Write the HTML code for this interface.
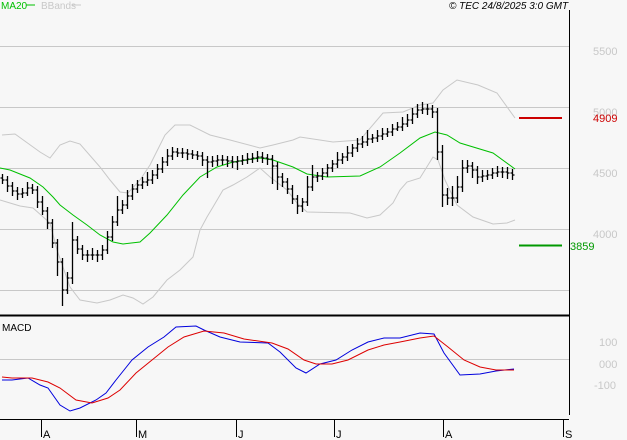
<!DOCTYPE html>
<html><head><meta charset="utf-8"><style>
html,body{margin:0;padding:0;background:#f7f7f7;}
svg{display:block;font-family:"Liberation Sans",sans-serif;}
</style></head><body>
<svg width="627" height="440" viewBox="0 0 627 440" xmlns="http://www.w3.org/2000/svg">
<rect width="627" height="440" fill="#f7f7f7"/>
<text x="1" y="9" font-size="10" fill="#00c000">MA20</text>
<line x1="26" y1="5" x2="35" y2="5" stroke="#00c000"/>
<text x="41" y="9" font-size="10" fill="#c8c8c8">BBands</text>
<line x1="72" y1="5" x2="81" y2="5" stroke="#c8c8c8"/>
<text x="449" y="9" font-size="10" font-style="italic" fill="#000">© TEC 24/8/2025 3:0 GMT</text>
<g stroke="#c8c8c8" stroke-width="1">
<line x1="0" y1="46.5" x2="569" y2="46.5"/><line x1="0" y1="107.5" x2="569" y2="107.5"/>
<line x1="0" y1="168.5" x2="569" y2="168.5"/><line x1="0" y1="229.5" x2="569" y2="229.5"/>
<line x1="0" y1="290.5" x2="569" y2="290.5"/><line x1="0" y1="359.5" x2="569" y2="359.5"/>
</g>
<g font-size="11" fill="#c8c8c8">
<text x="593" y="55">5500</text><text x="593" y="116">5000</text>
<text x="593" y="177">4500</text><text x="593" y="238">4000</text>
<text x="599" y="346">100</text><text x="599" y="368">000</text><text x="594" y="389">-100</text>
</g>
<polyline fill="none" stroke="#c8c8c8" points="2,135 15,134 40,152 50,158 60,145 70,141 80,144 100,167 110,180 120,192 128,193 140,180 150,165 165,135 175,125 190,125 210,135 230,140 260,148 273,145 293,140 300,137 333,142 360,140 383,113 403,112 420,105 433,103 443,90 457,80 478,85 497,93 515,118"/>
<polyline fill="none" stroke="#c8c8c8" points="0,200 10,203 20,206 33,208 50,223 57,250 70,287 80,300 97,303 110,300 123,295 133,298 143,304 153,297 167,280 180,270 193,257 200,230 207,217 213,207 223,190 233,185 247,177 260,168 270,177 287,190 297,203 307,212 350,213 367,218 380,215 393,203 400,190 407,182 420,178 433,157 438,160 445,180 457,205 473,217 493,224 507,223 515,220"/>
<polyline fill="none" stroke="#00c000" points="0,168 10,170 30,178 43,187 53,197 60,205 73,215 87,225 100,235 113,242 123,244 140,242 150,233 167,215 183,195 200,177 217,167 233,162 260,158 273,160 293,167 307,174 327,177 360,176 380,167 400,153 420,138 435,132 447,135 460,143 493,153 515,169"/>
<path fill="none" stroke="#000" stroke-width="1.3" d="
M2.5,174V184M0.5,178h2M2.5,180h2
M7.5,176V192M5.5,180h2M7.5,186h2
M12.5,182V196M10.5,186h2M12.5,191h2
M17.5,187V200M15.5,191h2M17.5,194h2
M22.5,188V198M20.5,194h2M22.5,193h2
M27.5,182V196M25.5,193h2M27.5,188h2
M32.5,184V194M30.5,188h2M32.5,190h2
M37.5,186V208M35.5,190h2M37.5,202h2
M42.5,196V215M40.5,202h2M42.5,211h2
M47.5,207V229M45.5,211h2M47.5,223h2
M52.5,219V248M50.5,223h2M52.5,243h2
M57.5,239V276M55.5,243h2M57.5,262h2
M62.5,258V306M60.5,262h2M62.5,290h2
M67.5,272V294M65.5,290h2M67.5,278h2
M72.5,222V284M70.5,278h2M72.5,240h2
M77.5,236V254M75.5,240h2M77.5,249h2
M82.5,245V260M80.5,249h2M82.5,255h2
M87.5,250V262M85.5,255h2M87.5,255h2
M92.5,248V260M90.5,255h2M92.5,255h2
M97.5,250V262M95.5,255h2M97.5,255h2
M102.5,245V260M100.5,255h2M102.5,250h2
M107.5,231V254M105.5,250h2M107.5,237h2
M112.5,216V241M110.5,237h2M112.5,222h2
M117.5,196V226M115.5,222h2M117.5,210h2
M122.5,200V214M120.5,210h2M122.5,205h2
M127.5,190V209M125.5,205h2M127.5,196h2
M132.5,184V200M130.5,196h2M132.5,189h2
M137.5,180V193M135.5,189h2M137.5,185h2
M142.5,177V189M140.5,185h2M142.5,182h2
M147.5,172V186M145.5,182h2M147.5,180h2
M152.5,170V184M150.5,180h2M152.5,175h2
M157.5,164V179M155.5,175h2M157.5,169h2
M162.5,157V173M160.5,169h2M162.5,162h2
M167.5,149V166M165.5,162h2M167.5,156h2
M172.5,147V160M170.5,156h2M172.5,152h2
M177.5,148V157M175.5,152h2M177.5,153h2
M182.5,148V158M180.5,153h2M182.5,153h2
M187.5,149V160M185.5,153h2M187.5,154h2
M192.5,150V159M190.5,154h2M192.5,155h2
M197.5,151V160M195.5,155h2M197.5,156h2
M202.5,152V166M200.5,156h2M202.5,160h2
M207.5,156V178M205.5,160h2M207.5,162h2
M212.5,156V167M210.5,162h2M212.5,161h2
M217.5,155V166M215.5,161h2M217.5,160h2
M222.5,155V165M220.5,160h2M222.5,160h2
M227.5,156V167M225.5,160h2M227.5,161h2
M232.5,156V168M230.5,161h2M232.5,162h2
M237.5,156V170M235.5,162h2M237.5,161h2
M242.5,155V165M240.5,161h2M242.5,160h2
M247.5,153V164M245.5,160h2M247.5,159h2
M252.5,153V163M250.5,159h2M252.5,158h2
M257.5,151V162M255.5,158h2M257.5,157h2
M262.5,152V163M260.5,157h2M262.5,158h2
M267.5,154V165M265.5,158h2M267.5,159h2
M272.5,155V184M270.5,159h2M272.5,166h2
M277.5,162V190M275.5,166h2M277.5,177h2
M282.5,173V187M280.5,177h2M282.5,182h2
M287.5,178V194M285.5,182h2M287.5,189h2
M292.5,185V204M290.5,189h2M292.5,199h2
M297.5,195V214M295.5,199h2M297.5,206h2
M302.5,198V212M300.5,206h2M302.5,202h2
M307.5,176V206M305.5,202h2M307.5,187h2
M312.5,165V191M310.5,187h2M312.5,177h2
M317.5,172V182M315.5,177h2M317.5,176h2
M322.5,168V180M320.5,176h2M322.5,173h2
M327.5,164V177M325.5,173h2M327.5,168h2
M332.5,160V172M330.5,168h2M332.5,164h2
M337.5,152V168M335.5,164h2M337.5,160h2
M342.5,153V164M340.5,160h2M342.5,157h2
M347.5,146V161M345.5,157h2M347.5,153h2
M352.5,144V157M350.5,153h2M352.5,148h2
M357.5,138V152M355.5,148h2M357.5,144h2
M362.5,136V148M360.5,144h2M362.5,142h2
M367.5,130V146M365.5,142h2M367.5,139h2
M372.5,134V143M370.5,139h2M372.5,138h2
M377.5,130V142M375.5,138h2M377.5,136h2
M382.5,128V140M380.5,136h2M382.5,134h2
M387.5,128V137M385.5,134h2M387.5,132h2
M392.5,124V136M390.5,132h2M392.5,129h2
M397.5,122V131M395.5,129h2M397.5,127h2
M402.5,117V131M400.5,127h2M402.5,124h2
M407.5,114V127M405.5,124h2M407.5,120h2
M412.5,108V124M410.5,120h2M412.5,114h2
M417.5,104V118M415.5,114h2M417.5,110h2
M422.5,102V114M420.5,110h2M422.5,109h2
M427.5,104V115M425.5,109h2M427.5,109h2
M432.5,105V118M430.5,109h2M432.5,112h2
M437.5,108V160M435.5,112h2M437.5,152h2
M442.5,145V207M440.5,152h2M442.5,195h2
M447.5,188V205M445.5,195h2M447.5,198h2
M452.5,186V206M450.5,198h2M452.5,198h2
M457.5,176V203M455.5,198h2M457.5,187h2
M462.5,160V192M460.5,187h2M462.5,168h2
M467.5,160V173M465.5,168h2M467.5,166h2
M472.5,162V178M470.5,166h2M472.5,170h2
M477.5,166V184M475.5,170h2M477.5,177h2
M482.5,170V182M480.5,177h2M482.5,176h2
M487.5,170V180M485.5,176h2M487.5,175h2
M492.5,168V179M490.5,175h2M492.5,173h2
M497.5,166V177M495.5,173h2M497.5,172h2
M502.5,167V178M500.5,172h2M502.5,172h2
M507.5,167V179M505.5,172h2M507.5,173h2
M512.5,169V180M510.5,173h2M512.5,175h2"/>
<line x1="519" y1="118" x2="562" y2="118" stroke="#cc0000" stroke-width="2"/>
<text x="593" y="122" font-size="11" fill="#cc0000">4909</text>
<line x1="519" y1="245.5" x2="562" y2="245.5" stroke="#009900" stroke-width="2"/>
<text x="570" y="250" font-size="11" fill="#009900">3859</text>
<line x1="569.5" y1="10" x2="569.5" y2="415" stroke="#000"/>
<line x1="0" y1="315.5" x2="569" y2="315.5" stroke="#000" stroke-width="2"/>
<line x1="0" y1="419.5" x2="569" y2="419.5" stroke="#000"/>
<text x="2" y="331" font-size="10" fill="#000">MACD</text>
<polyline fill="none" stroke="#0000dd" points="2,380 12,380 28,378 40,385 48,388 60,405 70,411 80,408 96,400 106,393 116,380 132,360 148,347 164,337 176,327 196,326 204,330 220,337 240,342 268,343 280,352 296,368 306,373 320,364 336,360 352,350 368,342 384,338 400,338 420,333 434,334 444,353 460,375 480,374 496,371 514,369"/>
<polyline fill="none" stroke="#dd0000" points="2,377 12,378 32,378 48,382 60,388 76,400 92,403 108,398 120,390 136,373 152,360 168,347 184,337 204,331 224,333 244,339 272,343 288,349 304,360 316,364 332,364 348,360 368,350 384,345 400,342 420,338 434,336 448,347 464,360 480,367 496,370 514,370"/>
<g stroke="#000"><line x1="41.5" y1="419" x2="41.5" y2="437"/><line x1="136.5" y1="419" x2="136.5" y2="437"/><line x1="236.5" y1="419" x2="236.5" y2="437"/><line x1="334.5" y1="419" x2="334.5" y2="437"/><line x1="443.5" y1="419" x2="443.5" y2="437"/><line x1="563.5" y1="419" x2="563.5" y2="437"/></g>
<g font-size="11" fill="#000"><text x="43" y="438">A</text><text x="138" y="438">M</text><text x="238" y="438">J</text><text x="336" y="438">J</text><text x="445" y="438">A</text><text x="565" y="438">S</text></g>
</svg>
</body></html>
